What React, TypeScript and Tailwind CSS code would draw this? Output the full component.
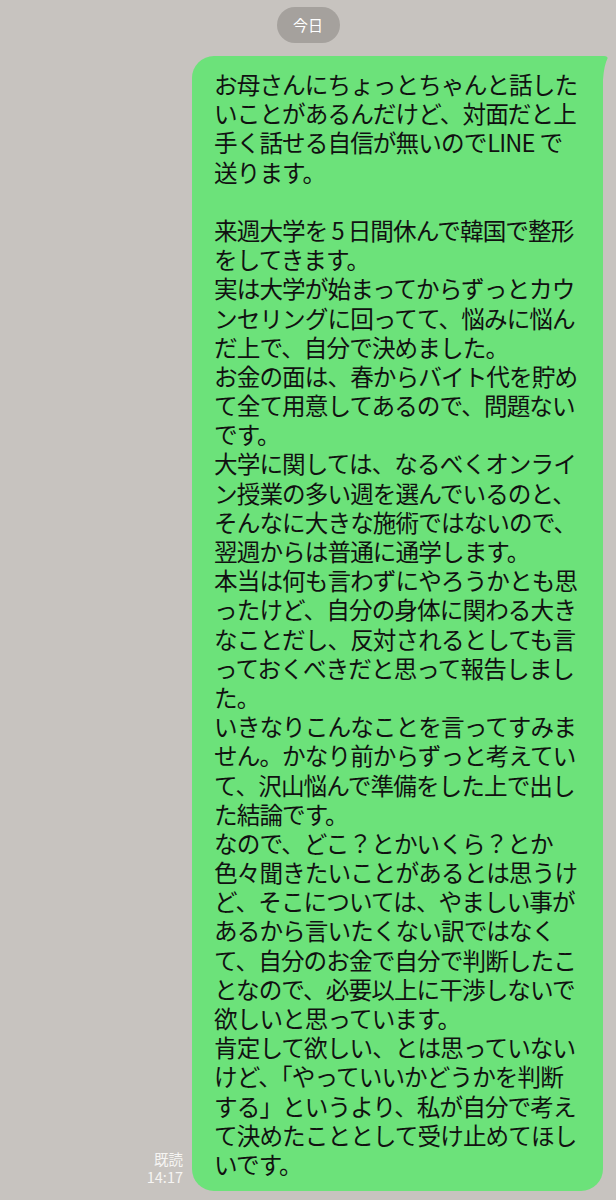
const lines: string[] = [
  "お母さんにちょっとちゃんと話した",
  "いことがあるんだけど、対面だと上",
  "手く話せる自信が無いのでLINEで",
  "送ります。",
  "",
  "来週大学を5日間休んで韓国で整形",
  "をしてきます。",
  "実は大学が始まってからずっとカウ",
  "ンセリングに回ってて、悩みに悩ん",
  "だ上で、自分で決めました。",
  "お金の面は、春からバイト代を貯め",
  "て全て用意してあるので、問題ない",
  "です。",
  "大学に関しては、なるべくオンライ",
  "ン授業の多い週を選んでいるのと、",
  "そんなに大きな施術ではないので、",
  "翌週からは普通に通学します。",
  "本当は何も言わずにやろうかとも思",
  "ったけど、自分の身体に関わる大き",
  "なことだし、反対されるとしても言",
  "っておくべきだと思って報告しまし",
  "た。",
  "いきなりこんなことを言ってすみま",
  "せん。かなり前からずっと考えてい",
  "て、沢山悩んで準備をした上で出し",
  "た結論です。",
  "なので、どこ？とかいくら？とか",
  "色々聞きたいことがあるとは思うけ",
  "ど、そこについては、やましい事が",
  "あるから言いたくない訳ではなく",
  "て、自分のお金で自分で判断したこ",
  "となので、必要以上に干渉しないで",
  "欲しいと思っています。",
  "肯定して欲しい、とは思っていない",
  "けど、「やっていいかどうかを判断",
  "する」というより、私が自分で考え",
  "て決めたこととして受け止めてほし",
  "いです。",
];

function Line({ text }: { text: string }) {
  if (text === "") return <div className="h-[29.2px]" />;
  const m = text.match(/^(.*?)(LINE|5)(.*)$/);
  if (m) {
    return (
      <div className="h-[29.2px] whitespace-nowrap">
        {m[1]}
        <span className={m[2] === "5" ? "mx-[4px]" : "ml-[1px] mr-[5px]"}>{m[2]}</span>
        {m[3]}
      </div>
    );
  }
  return <div className="h-[29.2px] whitespace-nowrap">{text}</div>;
}

export default function App() {
  return (
    <div className="w-[616px] h-[1200px] overflow-hidden bg-[#c7c3bf] font-['Noto_Sans_CJK_JP','Noto_Sans',sans-serif]">
      {/* date pill */}
      <div className="flex justify-center pt-[7px]">
        <div className="flex h-9 w-[63px] items-center justify-center rounded-full bg-[#a5a19d] text-[15px] text-white">
          今日
        </div>
      </div>

      {/* message row */}
      <div className="mt-[13px] flex items-end justify-end gap-[9px] pr-[13px]">
        <div className="mb-[5px] flex flex-col items-end text-[14.5px] leading-[18px] text-[#f6f5f3]">
          <span>既読</span>
          <span>14:17</span>
        </div>

        <div className="relative w-[411px] rounded-[22px] rounded-tr-none bg-[#6ce27a] pb-[12px] pl-[22px] pr-[8px] pt-[14px] text-[23.6px] leading-[29.2px] tracking-[-0.9px] text-[#111111]">
          {lines.map((l, i) => (
            <Line key={i} text={l} />
          ))}

          {/* tail */}
          <svg
            className="absolute -right-[5px] top-0"
            width="25"
            height="24"
            viewBox="0 0 25 24"
          >
            <path d="M0 0 H21 Q25 0 24.5 2.5 Q21 9 20 24 H0 Z" fill="#6ce27a" />
          </svg>
        </div>
      </div>
    </div>
  );
}
